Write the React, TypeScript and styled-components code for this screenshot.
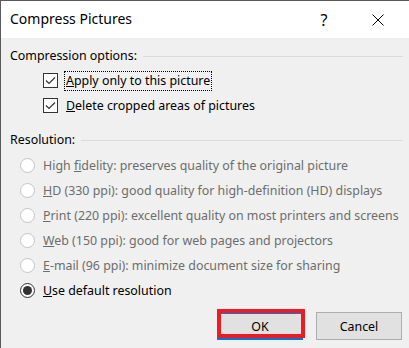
import styled, { createGlobalStyle } from "styled-components";

const GlobalStyle = createGlobalStyle`
    html, body {
        margin: 0;
        padding: 0;
        background: #f0f0f0;
    }
    body {
        font-family: "Noto Sans", "Open Sans", sans-serif;
        font-size: 12.4px;
        color: #000;
    }
`;

const Window = styled.div`
    width: 409px;
    height: 348px;
    box-sizing: border-box;
    border-top: 1px solid #5a5a5a;
    border-left: 1px solid #5a5a5a;
    background: #f0f0f0;
    display: flex;
    flex-direction: column;
    overflow: hidden;
`;

const TitleBar = styled.div`
    height: 37px;
    flex-shrink: 0;
    background: #fff;
    display: flex;
    align-items: center;
    padding-left: 9px;
`;

const Title = styled.div`
    flex: 1;
    font-size: 14px;
    padding-bottom: 2px;
`;

const TitleButton = styled.div`
    width: 46px;
    height: 37px;
    display: flex;
    align-items: center;
    justify-content: center;
    font-size: 16px;
    margin-right: 8px;
`;

const Body = styled.div`
    flex: 1;
    display: flex;
    flex-direction: column;
    padding: 9px 6px 0 9px;
`;

const GroupHeader = styled.div<{ $top?: number }>`
    display: flex;
    align-items: center;
    gap: 6px;
    height: 16px;
    margin-top: ${(p) => p.$top ?? 0}px;
    &::after {
        content: "";
        flex: 1;
        height: 1px;
        background: #dcdcdc;
        margin-top: 2px;
    }
`;

const CheckList = styled.div`
    display: flex;
    flex-direction: column;
    gap: 10px;
    margin: 10px 0 0 33px;
`;

const Row = styled.div`
    display: flex;
    align-items: center;
    height: 15px;
`;

const CheckBox = styled.div`
    width: 13px;
    height: 13px;
    border: 1px solid #333;
    background: #fff;
    display: flex;
    align-items: center;
    justify-content: center;
    flex-shrink: 0;
`;

const Label = styled.span<{ $disabled?: boolean; $focused?: boolean }>`
    margin-left: ${(p) => (p.$focused ? "6px" : "8px")};
    color: ${(p) => (p.$disabled ? "#6d6d6d" : "#000")};
    white-space: nowrap;
    line-height: 18px;
    padding: 0 ${(p) => (p.$focused ? "1px" : "0")};
    border: ${(p) => (p.$focused ? "1px dotted #000" : "none")};
`;

const RadioList = styled.div`
    display: flex;
    flex-direction: column;
    gap: 10px;
    margin: 11px 0 0 10px;
`;

const Radio = styled.div<{ $checked?: boolean; $disabled?: boolean }>`
    width: 13px;
    height: 13px;
    border-radius: 50%;
    border: 1px solid ${(p) => (p.$disabled ? "#c4c4c4" : "#333")};
    background: #fff;
    display: flex;
    align-items: center;
    justify-content: center;
    flex-shrink: 0;
    &::after {
        content: "";
        display: ${(p) => (p.$checked ? "block" : "none")};
        width: 9px;
        height: 9px;
        border-radius: 50%;
        background: #333;
    }
`;

const Footer = styled.div`
    margin-top: auto;
    display: flex;
    justify-content: flex-end;
    gap: 13px;
    padding: 0 1px 8px 0;
`;

const Button = styled.button<{ $default?: boolean }>`
    width: 86px;
    height: 28px;
    box-sizing: border-box;
    font-family: inherit;
    font-size: 12.4px;
    color: #000;
    background: #e1e1e1;
    border: ${(p) => (p.$default ? "2px solid #0078d7" : "1px solid #adadad")};
    padding: 0;
`;

const Highlight = styled.div`
    position: relative;
`;

const RedFrame = styled.div`
    position: absolute;
    left: 0;
    top: -3px;
    width: 88px;
    height: 29px;
    box-sizing: border-box;
    border: 4px solid #ed1c24;
    pointer-events: none;
`;

const Tick = () => (
    <svg width="11" height="9" viewBox="0 0 11 9">
        <path d="M1 4.5 L4 7.5 L10 1.5" fill="none" stroke="#333" strokeWidth="1.2" />
    </svg>
);

const CloseIcon = () => (
    <svg width="12" height="12" viewBox="0 0 12 12">
        <path d="M0.5 0.5 L11.5 11.5 M11.5 0.5 L0.5 11.5" stroke="#000" strokeWidth="1" />
    </svg>
);

const resolutions = [
    { key: "f", pre: "High ", post: "idelity: preserves quality of the original picture" },
    { key: "H", pre: "", post: "D (330 ppi): good quality for high-definition (HD) displays" },
    { key: "P", pre: "", post: "rint (220 ppi): excellent quality on most printers and screens" },
    { key: "W", pre: "", post: "eb (150 ppi): good for web pages and projectors" },
    { key: "E", pre: "", post: "-mail (96 ppi): minimize document size for sharing" },
];

export default function App() {
    return (
        <>
            <GlobalStyle />
            <Window>
                <TitleBar>
                    <Title>Compress Pictures</Title>
                    <TitleButton>?</TitleButton>
                    <TitleButton>
                        <CloseIcon />
                    </TitleButton>
                </TitleBar>
                <Body>
                    <GroupHeader>Compression options:</GroupHeader>
                    <CheckList>
                        <Row>
                            <CheckBox>
                                <Tick />
                            </CheckBox>
                            <Label $focused>
                                <u>A</u>pply only to this picture
                            </Label>
                        </Row>
                        <Row>
                            <CheckBox>
                                <Tick />
                            </CheckBox>
                            <Label>
                                <u>D</u>elete cropped areas of pictures
                            </Label>
                        </Row>
                    </CheckList>
                    <GroupHeader $top={18}>Resolution:</GroupHeader>
                    <RadioList>
                        {resolutions.map((r) => (
                            <Row key={r.key}>
                                <Radio $disabled />
                                <Label $disabled>
                                    {r.pre}
                                    <u>{r.key}</u>
                                    {r.post}
                                </Label>
                            </Row>
                        ))}
                        <Row>
                            <Radio $checked />
                            <Label>
                                <u>U</u>se default resolution
                            </Label>
                        </Row>
                    </RadioList>
                    <Footer>
                        <Highlight>
                            <Button $default>OK</Button>
                            <RedFrame />
                        </Highlight>
                        <Button>Cancel</Button>
                    </Footer>
                </Body>
            </Window>
        </>
    );
}
